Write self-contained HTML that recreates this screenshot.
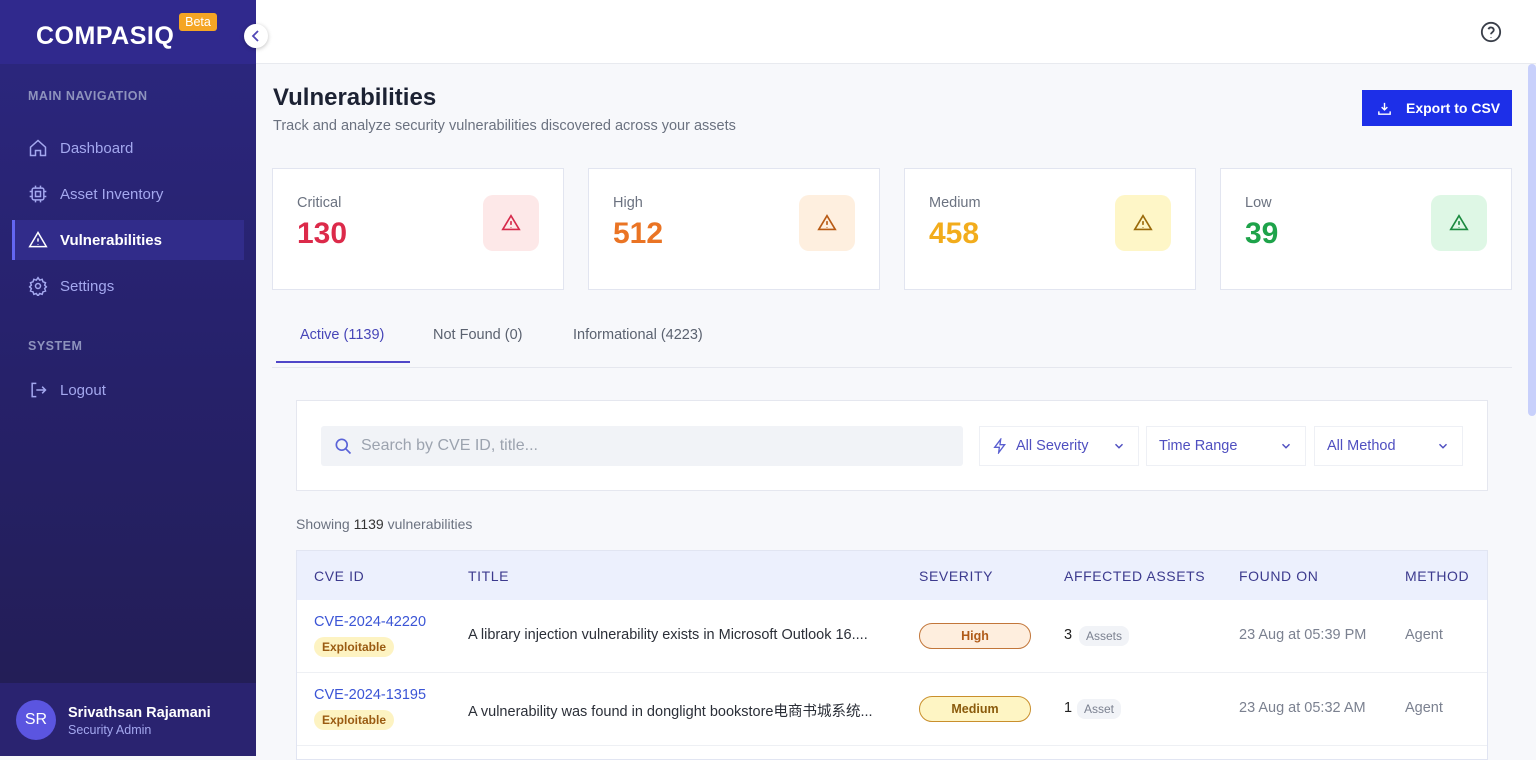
<!DOCTYPE html>
<html><head><meta charset="utf-8"><style>
*{box-sizing:border-box;margin:0;padding:0}
body{width:1536px;height:756px;overflow:hidden;font-family:"Liberation Sans","Noto Sans CJK SC",sans-serif;background:#f7f8fb;position:relative}
.sb{position:absolute;left:0;top:0;width:256px;height:756px;background:linear-gradient(180deg,#2c2780 0%,#26216a 50%,#221d52 100%)}
.sbh{height:64px;background:#30298d;position:relative}
.logo{position:absolute;left:36px;top:22px;color:#fff;font-weight:bold;font-size:25px;letter-spacing:0.5px}
.beta{position:absolute;left:179px;top:13px;width:38px;height:18px;background:#f5a524;color:#fff;font-size:12.5px;text-align:center;line-height:18px;border-radius:3px}
.col{position:absolute;left:244px;top:24px;width:24px;height:24px;border-radius:50%;background:#fff;box-shadow:0 1px 4px rgba(0,0,0,.25);z-index:3}
.sec{position:absolute;left:28px;font-size:12.5px;font-weight:bold;color:#8e93bd;letter-spacing:.5px}
.nav{position:absolute;left:12px;width:232px;height:40px;display:flex;align-items:center;padding-left:16px;color:#a4a8ef;font-size:15px}
.nav svg{margin-right:12px}
.nav.act{background:#312c8a;border-left:3px solid #6366f1;padding-left:13px;color:#fff;font-weight:bold}
.user{position:absolute;left:0;top:683px;width:256px;height:73px;background:#2a2370}
.av{position:absolute;left:16px;top:17px;width:40px;height:40px;border-radius:50%;background:#5b55e0;color:#fff;font-size:16px;display:flex;align-items:center;justify-content:center}
.top{position:absolute;left:256px;top:0;width:1280px;height:64px;background:#fff;border-bottom:1px solid #e8eaef}
h1{position:absolute;left:273px;top:84px;font-size:24px;color:#1c2233}
.sub{position:absolute;left:273px;top:118px;font-size:14.5px;color:#6b7280}
.btn{position:absolute;left:1362px;top:90px;width:150px;height:36px;background:#1d2fe8;color:#fff;font-size:14px;font-weight:bold;display:flex;align-items:center;padding-left:14px}
.card{position:absolute;top:168px;width:292px;height:122px;background:#fff;border:1px solid #e2e5f0}
.card .l{position:absolute;left:24px;top:26px;font-size:14.5px;color:#6b7280}
.card .n{position:absolute;left:24px;top:48px;font-size:30px;font-weight:bold}
.card .i{position:absolute;right:24px;top:26px;width:56px;height:56px;border-radius:10px;display:flex;align-items:center;justify-content:center}
.tab{position:absolute;top:327px;font-size:14.5px;color:#5b6270}
.panel{position:absolute;left:296px;top:400px;width:1192px;height:91px;background:#fff;border:1px solid #e5e7ef}
.srch{position:absolute;left:24px;top:25px;width:642px;height:40px;background:#f1f3f7;border-radius:3px;color:#9ca3af;font-size:16px;display:flex;align-items:center;padding-left:40px}
.dd{position:absolute;top:25px;height:40px;border:1px solid #eef0f5;color:#4f4fc0;font-size:14.5px;display:flex;align-items:center;padding-left:12px}
.dd .ch{position:absolute;right:12px;top:12px}
.tbl{position:absolute;left:296px;top:550px;width:1192px;height:210px;background:#fff;border:1px solid #e1e5f2}
.th{height:49px;background:#ecf0fd;position:relative}
.th span{position:absolute;top:17px;font-size:14px;color:#3c3a8e;letter-spacing:.6px}
.row{height:73px;position:relative;border-bottom:1px solid #eef0f4}
.row>*{position:absolute}
.cve{left:17px;top:14px;color:#3b55d6;font-size:14.5px}
.ex{left:17px;top:37px;background:#fdf3c2;color:#9a5b12;font-size:12px;font-weight:bold;padding:3px 8px;border-radius:10px}
.tt{left:171px;top:27px;font-size:14.5px;color:#2b2f38}
.sev{left:622px;top:23px;width:112px;height:26px;border-radius:13px;font-size:12.5px;font-weight:bold;display:flex;align-items:center;justify-content:center}
.cnt{left:767px;top:27px;font-size:14.5px;color:#222}
.ab{top:26px;background:#f1f3f7;color:#7b8190;font-size:12px;padding:3px 7px;border-radius:8px}
.dt{left:942px;top:27px;font-size:14.5px;color:#7b8190}
.mt{left:1108px;top:27px;font-size:14.5px;color:#7b8190}
</style></head><body>
<div class="sb">
 <div class="sbh"><div class="logo">COMPASIQ</div><div class="beta">Beta</div></div>
 <div class="sec" style="top:89px">MAIN NAVIGATION</div>
 <div class="nav" style="top:128px"><svg width="20" height="20" viewBox="0 0 24 24" fill="none" stroke="#a4a8ef" stroke-width="1.8"><path d="M3 11l9-8 9 8v10h-6v-6h-6v6H3z"/></svg>Dashboard</div>
 <div class="nav" style="top:174px"><svg width="20" height="20" viewBox="0 0 24 24" fill="none" stroke="#a4a8ef" stroke-width="1.8"><rect x="5" y="5" width="14" height="14" rx="2"/><rect x="9" y="9" width="6" height="6"/><path d="M9 2v3M15 2v3M9 19v3M15 19v3M2 9h3M2 15h3M19 9h3M19 15h3"/></svg>Asset Inventory</div>
 <div class="nav act" style="top:220px"><svg width="20" height="20" viewBox="0 0 24 24" fill="none" stroke="#fff" stroke-width="1.8"><path d="M12 3L2 20h20z M12 10v4 M12 17v.5"/></svg>Vulnerabilities</div>
 <div class="nav" style="top:266px"><svg width="20" height="20" viewBox="0 0 24 24" fill="none" stroke="#a4a8ef" stroke-width="1.8"><circle cx="12" cy="12" r="3"/><path d="M12 2l2 3 3-1 1 3 3 1-1 3 2 2-2 2 1 3-3 1-1 3-3-1-2 3-2-3-3 1-1-3-3-1 1-3-2-2 2-2-1-3 3-1 1-3 3 1z"/></svg>Settings</div>
 <div class="sec" style="top:339px">SYSTEM</div>
 <div class="nav" style="top:370px"><svg width="20" height="20" viewBox="0 0 24 24" fill="none" stroke="#a4a8ef" stroke-width="1.8"><path d="M10 4H5v16h5M10 12h11M17 8l4 4-4 4"/></svg>Logout</div>
 <div class="user"><div class="av">SR</div><div style="position:absolute;left:68px;top:22px;color:#fff;font-weight:bold;font-size:14.5px">Srivathsan Rajamani</div><div style="position:absolute;left:68px;top:40px;color:#a4a8ef;font-size:12.5px">Security Admin</div></div>
</div>
<div class="col"><svg width="24" height="24" viewBox="0 0 24 24" fill="none" stroke="#4f46b5" stroke-width="1.8"><path d="M14 7l-5 5 5 5"/></svg></div>
<div class="top"><svg style="position:absolute;left:1224px;top:21px" width="22" height="22" viewBox="0 0 24 24" fill="none" stroke="#3a3f4a" stroke-width="2"><circle cx="12" cy="12" r="10"/><path d="M9.2 9a3 3 0 0 1 5.8 1c0 2-3 2.5-3 4.5M12 17.5v.5"/></svg></div>
<div style="position:absolute;left:1528px;top:64px;width:8px;height:352px;background:#c8d0fb;border-radius:4px"></div>
<h1>Vulnerabilities</h1>
<div class="sub">Track and analyze security vulnerabilities discovered across your assets</div>
<div class="btn"><svg width="17" height="17" viewBox="0 0 24 24" fill="none" stroke="#fff" stroke-width="2"><path d="M12 4v10M8 10l4 4 4-4M4 16v4h16v-4"/></svg><span style="margin-left:13px">Export to CSV</span></div>
<div class="card" style="left:272px"><div class="l">Critical</div><div class="n" style="color:#dc2a4a">130</div><div class="i" style="background:#fde8e8"><svg width="22" height="22" viewBox="0 0 24 24" fill="none" stroke="#d62a4b" stroke-width="1.8"><path d="M12 4L3 19h18z M12 10v4 M12 16.5v.5"/></svg></div></div>
<div class="card" style="left:588px"><div class="l">High</div><div class="n" style="color:#ea7424">512</div><div class="i" style="background:#feefdf"><svg width="22" height="22" viewBox="0 0 24 24" fill="none" stroke="#b85a14" stroke-width="1.8"><path d="M12 4L3 19h18z M12 10v4 M12 16.5v.5"/></svg></div></div>
<div class="card" style="left:904px"><div class="l">Medium</div><div class="n" style="color:#f2ac1c">458</div><div class="i" style="background:#fef6c7"><svg width="22" height="22" viewBox="0 0 24 24" fill="none" stroke="#9a6a0a" stroke-width="1.8"><path d="M12 4L3 19h18z M12 10v4 M12 16.5v.5"/></svg></div></div>
<div class="card" style="left:1220px"><div class="l">Low</div><div class="n" style="color:#1ea34a">39</div><div class="i" style="background:#def7e5"><svg width="22" height="22" viewBox="0 0 24 24" fill="none" stroke="#1b8a3f" stroke-width="1.8"><path d="M12 4L3 19h18z M12 10v4 M12 16.5v.5"/></svg></div></div>
<div class="tab" style="left:300px;color:#4746b8">Active (1139)</div>
<div class="tab" style="left:433px">Not Found (0)</div>
<div class="tab" style="left:573px">Informational (4223)</div>
<div style="position:absolute;left:272px;top:367px;width:1240px;height:1px;background:#e5e7ee"></div>
<div style="position:absolute;left:276px;top:361px;width:134px;height:2px;background:#4f46c8"></div>
<div class="panel">
 <div class="srch"><svg style="position:absolute;left:12px;top:10px" width="20" height="20" viewBox="0 0 24 24" fill="none" stroke="#5a63d8" stroke-width="2"><circle cx="10.5" cy="10.5" r="6.5"/><path d="M15.5 15.5L21 21"/></svg>Search by CVE ID, title...</div>
 <div class="dd" style="left:682px;width:160px"><svg width="16" height="16" viewBox="0 0 24 24" fill="none" stroke="#5a5fd0" stroke-width="2"><path d="M13 2L4 14h7l-1 8 9-12h-7z"/></svg><span style="margin-left:8px">All Severity</span><svg class="ch" width="14" height="14" viewBox="0 0 24 24" fill="none" stroke="#4f4fc0" stroke-width="2.5"><path d="M6 9l6 6 6-6"/></svg></div>
 <div class="dd" style="left:849px;width:160px">Time Range<svg class="ch" width="14" height="14" viewBox="0 0 24 24" fill="none" stroke="#4f4fc0" stroke-width="2.5"><path d="M6 9l6 6 6-6"/></svg></div>
 <div class="dd" style="left:1017px;width:149px">All Method<svg class="ch" width="14" height="14" viewBox="0 0 24 24" fill="none" stroke="#4f4fc0" stroke-width="2.5"><path d="M6 9l6 6 6-6"/></svg></div>
</div>
<div style="position:absolute;left:296px;top:516px;font-size:14px;color:#6b7280">Showing <b style="color:#333;font-weight:normal">1139</b> vulnerabilities</div>
<div class="tbl">
 <div class="th"><span style="left:17px">CVE ID</span><span style="left:171px">TITLE</span><span style="left:622px">SEVERITY</span><span style="left:767px">AFFECTED ASSETS</span><span style="left:942px">FOUND ON</span><span style="left:1108px">METHOD</span></div>
 <div class="row"><div class="cve">CVE-2024-42220</div><div class="ex">Exploitable</div><div class="tt">A library injection vulnerability exists in Microsoft Outlook 16....</div><div class="sev" style="background:#feeede;border:1px solid #c2763a;color:#b05a18">High</div><div class="cnt">3</div><div class="ab" style="left:782px">Assets</div><div class="dt">23 Aug at 05:39 PM</div><div class="mt">Agent</div></div>
 <div class="row"><div class="cve">CVE-2024-13195</div><div class="ex">Exploitable</div><div class="tt">A vulnerability was found in donglight bookstore电商书城系统...</div><div class="sev" style="background:#fef5c4;border:1px solid #c98f2c;color:#8a5a0c">Medium</div><div class="cnt">1</div><div class="ab" style="left:780px">Asset</div><div class="dt">23 Aug at 05:32 AM</div><div class="mt">Agent</div></div>
</div>
</body></html>
